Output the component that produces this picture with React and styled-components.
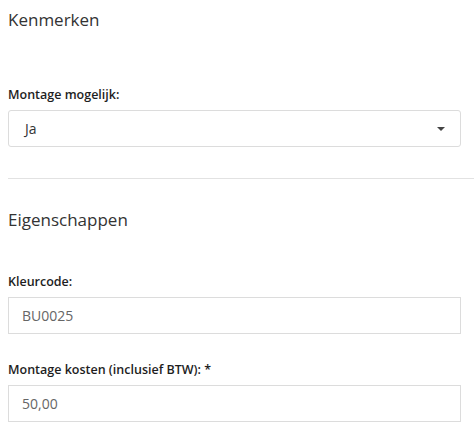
import React from "react";
import styled, { createGlobalStyle } from "styled-components";

const GlobalStyle = createGlobalStyle`
  body {
    margin: 0;
    background: #fff;
    font-family: "Open Sans", "Liberation Sans", sans-serif;
    color: #333;
  }
`;

const Page = styled.div`
  padding: 0 0 0 8px;
`;

const Section = styled.section`
  padding: ${(p) => p.$top}px 13px 0 0;
`;

const Heading = styled.h3`
  margin: 0 0 ${(p) => p.$space}px;
  font-size: 17px;
  font-weight: 400;
  color: #333;
  line-height: 24px;
`;

const Field = styled.div`
  display: flex;
  flex-direction: column;
  gap: 6px;
  margin-bottom: ${(p) => p.$space || 0}px;
`;

const Label = styled.label`
  font-size: 12.5px;
  font-weight: 600;
  color: #1e1e1e;
  line-height: 18px;
`;

const Box = styled.div`
  position: relative;
  display: flex;
  align-items: center;
  height: 37px;
  box-sizing: border-box;
  border: 1px solid #dcdcdc;
  border-radius: ${(p) => (p.$select ? 3 : 0)}px;
  padding: 0 ${(p) => (p.$select ? 16 : 13)}px;
  font-size: 14px;
  color: ${(p) => (p.$select ? "#333" : "#666")};
`;

const Caret = styled.span`
  position: absolute;
  right: 15px;
  top: 50%;
  margin-top: -2px;
  width: 0;
  height: 0;
  border-left: 4px solid transparent;
  border-right: 4px solid transparent;
  border-top: 4px solid #444;
`;

const Divider = styled.hr`
  margin: 31px 0 0;
  border: 0;
  border-top: 1px solid #e2e2e2;
`;

export default function App() {
  return (
    <Page>
      <GlobalStyle />
      <Section $top={8}>
        <Heading $space={54}>Kenmerken</Heading>
        <Field>
          <Label>Montage mogelijk:</Label>
          <Box $select>
            Ja
            <Caret />
          </Box>
        </Field>
      </Section>
      <Divider />
      <Section $top={29}>
        <Heading $space={41}>Eigenschappen</Heading>
        <Field $space={27}>
          <Label>Kleurcode:</Label>
          <Box>BU0025</Box>
        </Field>
        <Field>
          <Label>Montage kosten (inclusief BTW): *</Label>
          <Box>50,00</Box>
        </Field>
      </Section>
    </Page>
  );
}
